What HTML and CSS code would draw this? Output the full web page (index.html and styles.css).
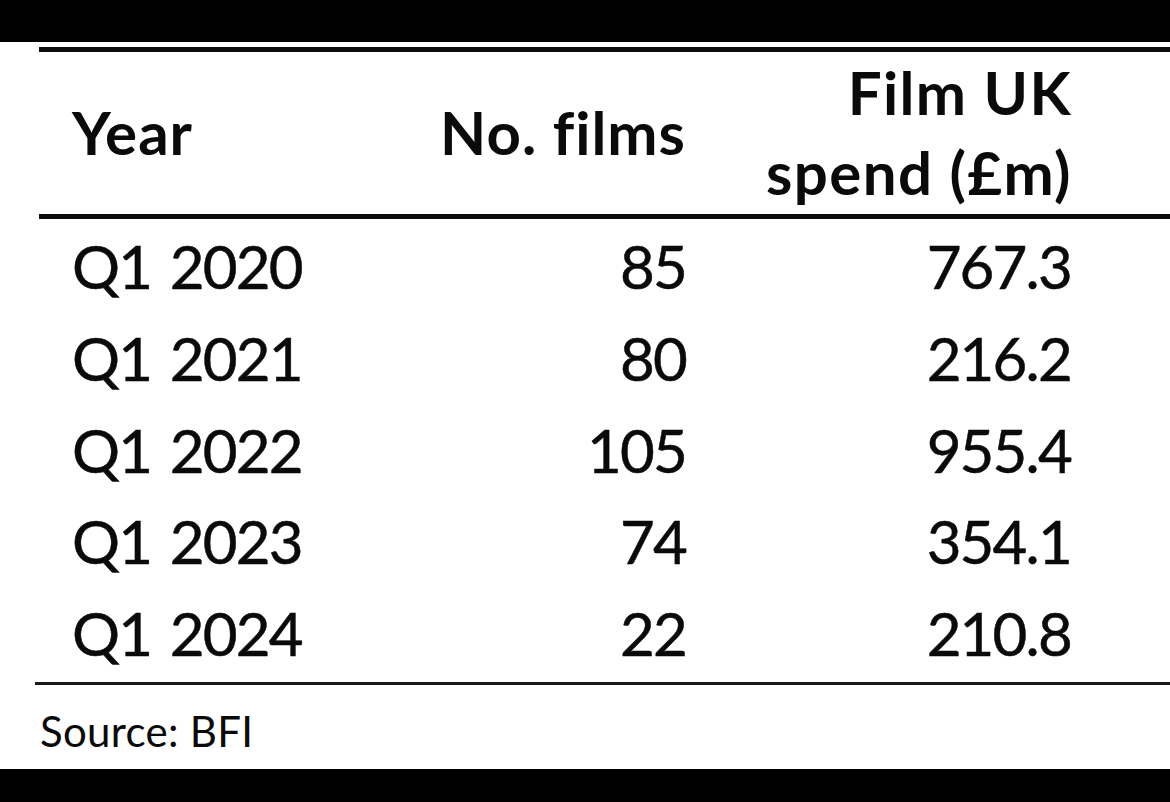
FILE: index.html
```html
<!DOCTYPE html>
<html lang="en">
<head>
<meta charset="utf-8">
<title>Film UK spend</title>
<link rel="stylesheet" href="styles.css">
</head>
<body>
<div class="bar bar-top"></div>
<main class="sheet">
  <div class="table">
    <div class="row head">
      <div class="cell c1 mid">Year</div>
      <div class="cell c2 mid">No. films</div>
      <div class="cell c3">Film UK<br>spend (£m)</div>
    </div>
    <div class="body">
      <div class="row"><div class="cell c1">Q1 2020</div><div class="cell c2">85</div><div class="cell c3">767.3</div></div>
      <div class="row"><div class="cell c1">Q1 2021</div><div class="cell c2">80</div><div class="cell c3">216.2</div></div>
      <div class="row"><div class="cell c1">Q1 2022</div><div class="cell c2">105</div><div class="cell c3">955.4</div></div>
      <div class="row"><div class="cell c1">Q1 2023</div><div class="cell c2">74</div><div class="cell c3">354.1</div></div>
      <div class="row"><div class="cell c1">Q1 2024</div><div class="cell c2">22</div><div class="cell c3">210.8</div></div>
    </div>
  </div>
  <div class="rule"></div>
  <p class="source">Source: BFI</p>
</main>
<div class="bar bar-bottom"></div>
</body>
</html>
```

FILE: styles.css
```css
* { box-sizing: border-box; }
html, body { margin: 0; padding: 0; }
body {
  width: 1170px;
  height: 802px;
  background: #fff;
  color: #0a0a0a;
  font-family: "Lato", "Open Sans", sans-serif;
  display: flex;
  flex-direction: column;
  overflow: hidden;
}
.bar { background: #000; flex: none; }
.bar-top { height: 42px; }
.bar-bottom { height: 33px; }
.sheet {
  flex: 1;
  display: flex;
  flex-direction: column;
  padding-top: 5px;
}
.table {
  margin-left: 39px;
  border-top: 5px solid #0d0d0d;
}
.row {
  display: grid;
  grid-template-columns: 1fr 300px 385px;
  padding: 0 99px 0 33px;
  font-size: 60px;
  line-height: 91.75px;
  height: 91.75px;
  letter-spacing: -1.8px;
  word-spacing: 5px;
  -webkit-text-stroke: 0.5px #0a0a0a;
}
.head {
  height: auto;
  font-weight: 700;
  line-height: 80px;
  padding-bottom: 2px;
  letter-spacing: 1px;
  word-spacing: 0;
  -webkit-text-stroke: 0;
  border-bottom: 5px solid #0d0d0d;
}
.head .c3 { letter-spacing: 1.4px; margin-right: -1px; }
.cell { white-space: nowrap; }
.mid { align-self: center; }
.c2, .c3 { text-align: right; }
.body { padding: 2px 0 2px; }
.rule {
  margin-left: 35px;
  height: 3px;
  background: #1a1a1a;
}
.source {
  margin: 21px 0 0 40px;
  font-size: 42px;
  line-height: 50px;
  letter-spacing: 0.3px;
}
```
